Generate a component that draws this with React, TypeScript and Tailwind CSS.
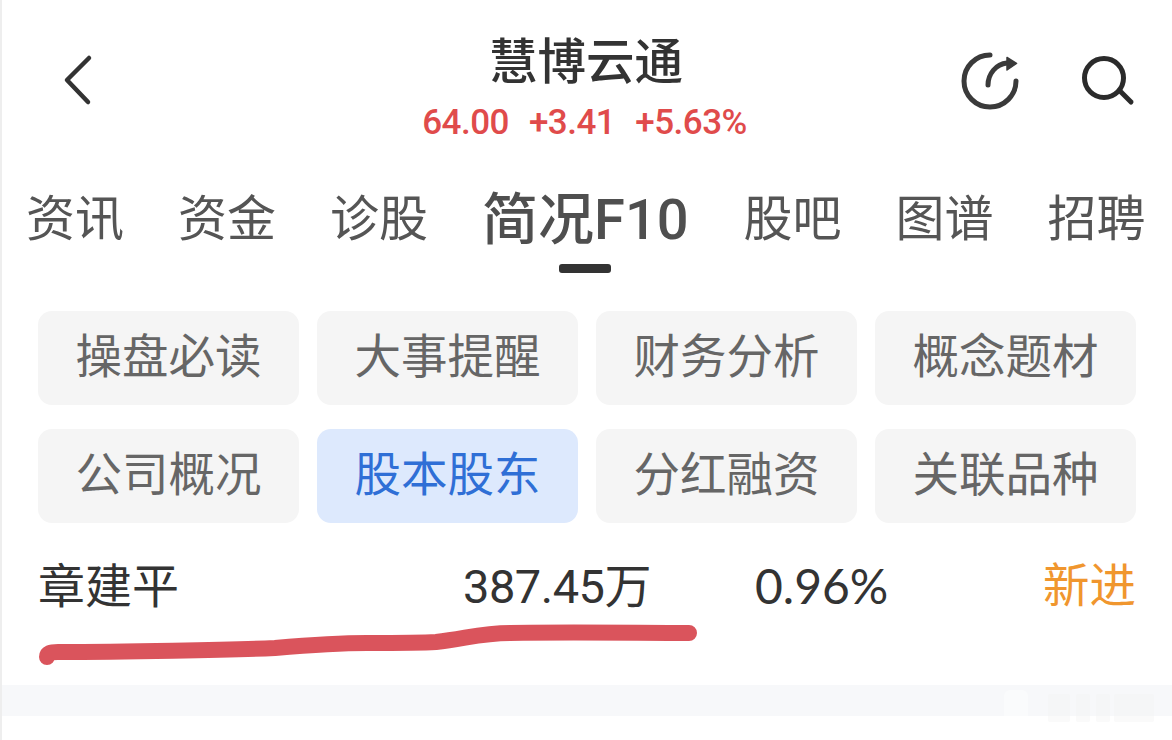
const cjk = "font-['Roboto','Noto_Sans_CJK_SC',sans-serif]";

const tabs = [
  { label: "资讯" },
  { label: "资金" },
  { label: "诊股" },
  { label: "简况F10", active: true },
  { label: "股吧" },
  { label: "图谱" },
  { label: "招聘" },
];

const buttons = [
  { label: "操盘必读" },
  { label: "大事提醒" },
  { label: "财务分析" },
  { label: "概念题材" },
  { label: "公司概况" },
  { label: "股本股东", active: true },
  { label: "分红融资" },
  { label: "关联品种" },
];

export default function App() {
  return (
    <div className={`relative w-[1172px] h-[740px] overflow-hidden bg-white border-l-2 border-[#eeeeee] ${cjk}`}>
      {/* header */}
      <div className="relative h-[184px] -ml-[2px]">
        <svg className="absolute left-[62px] top-[54px]" width="32" height="52" viewBox="0 0 32 52" fill="none">
          <path d="M27 4 L5 26 L26 48" stroke="#333333" strokeWidth="4.5" strokeLinecap="round" strokeLinejoin="round" />
        </svg>
        <div className="flex flex-col items-center pt-[34px]">
          <div className="text-[48.5px] leading-[58px] font-medium text-[#333333]">慧博云通</div>
          <div className="mt-[11px] flex gap-[20px] text-[35px] leading-[40px] font-medium tracking-[-0.5px] text-[#e04b4b]">
            <span className="-ml-[3px]">64.00</span>
            <span>+3.41</span>
            <span>+5.63%</span>
          </div>
        </div>
        {/* refresh */}
        <svg className="absolute left-[958px] top-[50px]" width="64" height="64" viewBox="0 0 64 64" fill="none">
          <path d="M32 5 A26 26 0 1 0 58 31" stroke="#3a3a3a" strokeWidth="5" strokeLinecap="round" />
          <path d="M30 35 C30 24 38 14 49 13" stroke="#3a3a3a" strokeWidth="5" strokeLinecap="round" />
          <path d="M49 7.5 L58.5 13.5 L49 20 Z" fill="#3a3a3a" stroke="#3a3a3a" strokeWidth="1.5" strokeLinejoin="round" />
        </svg>
        {/* search */}
        <svg className="absolute left-[1077px] top-[52px]" width="60" height="60" viewBox="0 0 60 60" fill="none">
          <circle cx="27" cy="26" r="19.5" stroke="#2b2b2b" strokeWidth="5" />
          <path d="M44 40 L54 50" stroke="#2b2b2b" strokeWidth="5" strokeLinecap="round" />
        </svg>
      </div>

      {/* tabs */}
      <div className="-ml-[2px] flex items-start gap-[54px] pl-[26px] h-[127px]">
        {tabs.map((tab) =>
          tab.active ? (
            <div key={tab.label} className="flex flex-col items-center mt-[-2px] mr-[1px]">
              <span className="text-[56px] leading-[76px] font-medium text-[#4f4f4f]">{tab.label}</span>
              <span className="mt-[6px] w-[52px] h-[9px] rounded-[3px] bg-[#333333]" />
            </div>
          ) : (
            <span key={tab.label} className="text-[49px] leading-[72px] text-[#555555]">
              {tab.label}
            </span>
          )
        )}
      </div>

      {/* sub buttons */}
      <div className="-ml-[2px] grid grid-cols-4 gap-x-[18px] gap-y-[24px] pl-[38px] w-[1136px]">
        {buttons.map((btn) => (
          <div
            key={btn.label}
            className={`h-[94px] rounded-[14px] flex items-center justify-center text-[46.5px] ${
              btn.active ? "bg-[#dde9fd] text-[#2f6fd6]" : "bg-[#f5f5f5] text-[#666666]"
            }`}
          >
            {btn.label}
          </div>
        ))}
      </div>

      {/* holder row */}
      <div className="-ml-[2px] relative">
        <div className="flex items-center h-[128px] text-[47px] text-[#333333] pl-[38px]">
          <span className="w-[425px]">章建平</span>
          <span className="w-[292px] tracking-[-0.5px]">387.45万</span>
          <span className="w-[288px] font-['Lato',sans-serif] text-[48px] leading-[48px] -mt-[3px]">0.96%</span>
          <span className="text-[#f0962e] text-[46.5px]">新进</span>
        </div>
        <svg className="absolute left-0 top-[90px]" width="720" height="60" viewBox="0 0 720 60" fill="none">
          <path
            d="M47 44 C47 40 50 39 58 39 C120 39 230 37 275 35 C310 32 340 30 367 30 C400 30 420 30 436 29 C465 26 480 20 510 20 C570 19 640 20 689 20"
            stroke="#da545c"
            strokeWidth="16"
            strokeLinecap="round"
            strokeLinejoin="round"
          />
        </svg>
        <div className="mt-[34px] h-[31px] bg-[#f7f8fa]" />
      </div>

      {/* faint watermark */}
      <svg className="absolute left-[998px] top-[688px]" width="160" height="40" viewBox="0 0 160 40" fill="#f4f4f4" opacity="0.45">
        <rect x="4" y="2" width="24" height="32" rx="6" fill="#ffffff" />
        <rect x="48" y="6" width="22" height="28" rx="2" />
        <rect x="76" y="6" width="14" height="28" rx="2" />
        <rect x="96" y="6" width="14" height="28" rx="2" />
        <rect x="114" y="6" width="40" height="28" rx="2" />
      </svg>
    </div>
  );
}
